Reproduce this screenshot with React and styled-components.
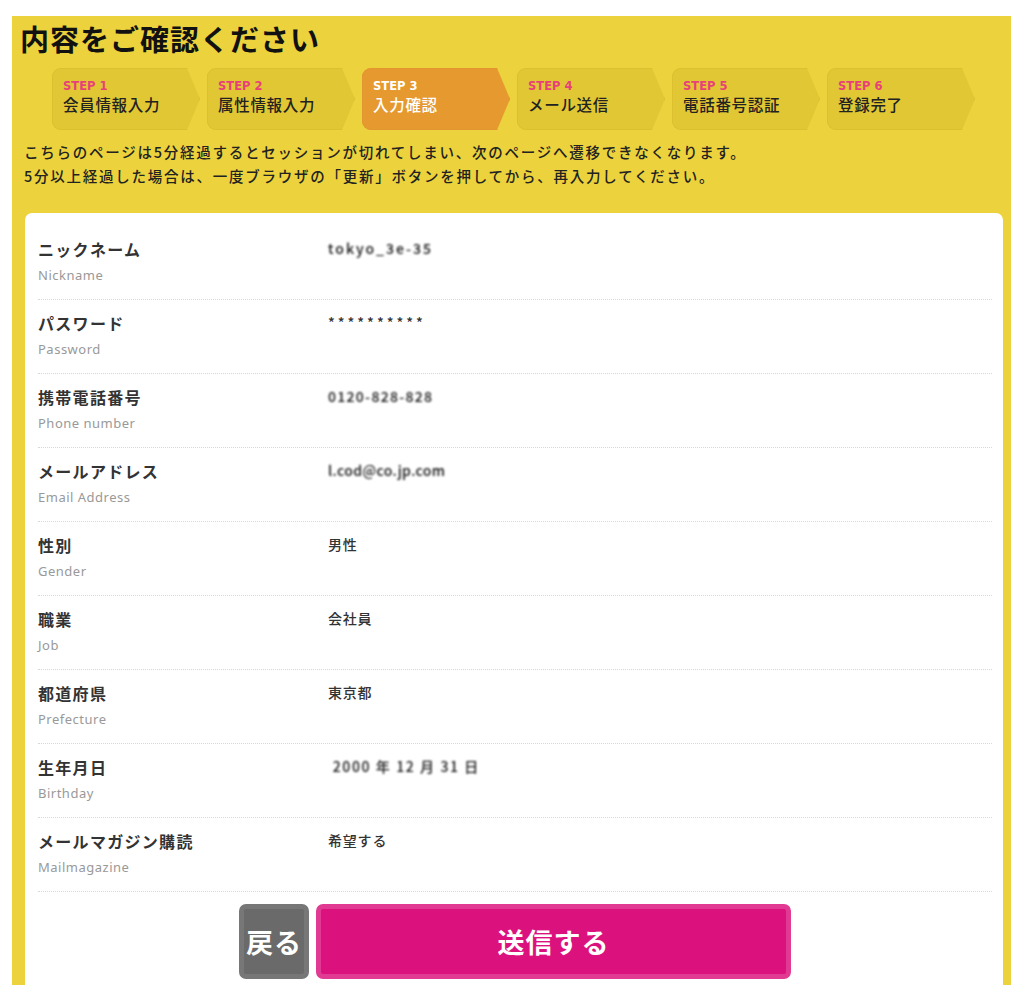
import React from "react";
import styled, { createGlobalStyle } from "styled-components";

const GlobalStyle = createGlobalStyle`
  body {
    margin: 0;
    background: #fff;
    font-family: "Noto Sans CJK JP", "Noto Sans", sans-serif;
    color: #222;
  }
`;

const Panel = styled.div`
  margin: 16px 13px 0 12px;
  height: 969px;
  overflow: hidden;
  background: #ecd23c;
  padding: 3px 0 0;
  box-sizing: border-box;
`;

const Title = styled.h1`
  margin: 0 0 0 8px;
  font-size: 29px;
  line-height: 38px;
  font-weight: 700;
  color: #111;
  letter-spacing: 1px;
`;

const Steps = styled.ol`
  display: flex;
  gap: 7px;
  list-style: none;
  margin: 11px 0 0 40px;
  padding: 0;
`;

const Step = styled.li`
  width: 148px;
  height: 62px;
  box-sizing: border-box;
  padding: 11px 0 0 11px;
  border-radius: 9px 0 0 9px;
  clip-path: polygon(0 0, calc(100% - 13px) 0, 100% 50%, calc(100% - 13px) 100%, 0 100%);
  background: ${(p) => (p.$active ? "#e5992f" : "#e2c734")};
  box-shadow: inset 0 0 0 1px ${(p) => (p.$active ? "#e39530" : "#dcc030")};
  color: ${(p) => (p.$active ? "#fff" : "#222")};
`;

const StepNo = styled.div`
  font-family: "DejaVu Sans", "Noto Sans", sans-serif;
  font-size: 11.5px;
  line-height: 14px;
  font-weight: 700;
  color: ${(p) => (p.$active ? "#fff" : "#e8407a")};
`;

const StepName = styled.div`
  margin-top: 1px;
  font-size: 15.5px;
  line-height: 20px;
  font-weight: 500;
  letter-spacing: 0.7px;
`;

const Notes = styled.p`
  margin: 10px 0 0 12px;
  font-size: 14.5px;
  line-height: 24px;
  font-weight: 500;
  letter-spacing: 1.75px;
  color: #222;
`;

const Card = styled.div`
  margin: 25px 8px 0 13px;
  background: #fff;
  border-radius: 7px;
  padding: 13px 11px 40px 13px;
`;

const Row = styled.div`
  display: grid;
  grid-template-columns: 290px 1fr;
  padding: 12px 0 13px;
  border-bottom: 1px dotted #d8d8d8;
`;

const Label = styled.div`
  font-size: 16px;
  line-height: 22px;
  font-weight: 700;
  letter-spacing: 1.3px;
  color: #333;
`;

const Sub = styled.div`
  margin-top: 5px;
  font-family: "Noto Sans", sans-serif;
  font-size: 13px;
  line-height: 21px;
  letter-spacing: 0.5px;
  color: #999;
`;

const Value = styled.div`
  font-size: 14px;
  line-height: 20px;
  font-weight: 500;
  color: #333;
  letter-spacing: ${(p) => p.$spacing || "0.8px"};
  filter: ${(p) => (p.$masked ? "blur(1.3px) contrast(1.4)" : "none")};
`;

const Actions = styled.div`
  display: flex;
  justify-content: center;
  gap: 7px;
  padding-top: 12px;
`;

const Button = styled.button`
  height: 75px;
  width: ${(p) => (p.$wide ? "475px" : "70px")};
  border-radius: 7px;
  border: 5px solid ${(p) => (p.$wide ? "#e03a93" : "#777")};
  background: ${(p) => (p.$wide ? "#db127d" : "#6a6a6a")};
  color: #fff;
  font-family: "Noto Sans CJK JP", sans-serif;
  font-size: 27px;
  font-weight: 700;
  letter-spacing: 1px;
  padding: 0;
  cursor: pointer;
`;

const steps = [
  "会員情報入力",
  "属性情報入力",
  "入力確認",
  "メール送信",
  "電話番号認証",
  "登録完了",
];

const rows = [
  { label: "ニックネーム", sub: "Nickname", value: "tokyo_3e-35", masked: true, spacing: "2px" },
  { label: "パスワード", sub: "Password", value: "**********", spacing: "3px" },
  { label: "携帯電話番号", sub: "Phone number", value: "0120-828-828", masked: true, spacing: "1.3px" },
  { label: "メールアドレス", sub: "Email Address", value: "l.cod@co.jp.com", masked: true, spacing: "0.4px" },
  { label: "性別", sub: "Gender", value: "男性" },
  { label: "職業", sub: "Job", value: "会社員" },
  { label: "都道府県", sub: "Prefecture", value: "東京都" },
  { label: "生年月日", sub: "Birthday", value: "\u00a02000 年 12 月 31 日", masked: true, spacing: "1.6px" },
  { label: "メールマガジン購読", sub: "Mailmagazine", value: "希望する" },
];

export default function App() {
  return (
    <>
      <GlobalStyle />
      <Panel>
        <Title>内容をご確認ください</Title>
        <Steps>
          {steps.map((name, i) => (
            <Step key={name} $active={i === 2}>
              <StepNo $active={i === 2}>STEP {i + 1}</StepNo>
              <StepName>{name}</StepName>
            </Step>
          ))}
        </Steps>
        <Notes>
          こちらのページは5分経過するとセッションが切れてしまい、次のページへ遷移できなくなります。
          <br />
          5分以上経過した場合は、一度ブラウザの「更新」ボタンを押してから、再入力してください。
        </Notes>
        <Card>
          {rows.map((r) => (
            <Row key={r.label}>
              <div>
                <Label>{r.label}</Label>
                <Sub>{r.sub}</Sub>
              </div>
              <Value $masked={r.masked} $spacing={r.spacing}>
                {r.value}
              </Value>
            </Row>
          ))}
          <Actions>
            <Button type="button">戻る</Button>
            <Button type="button" $wide>
              送信する
            </Button>
          </Actions>
        </Card>
      </Panel>
    </>
  );
}
